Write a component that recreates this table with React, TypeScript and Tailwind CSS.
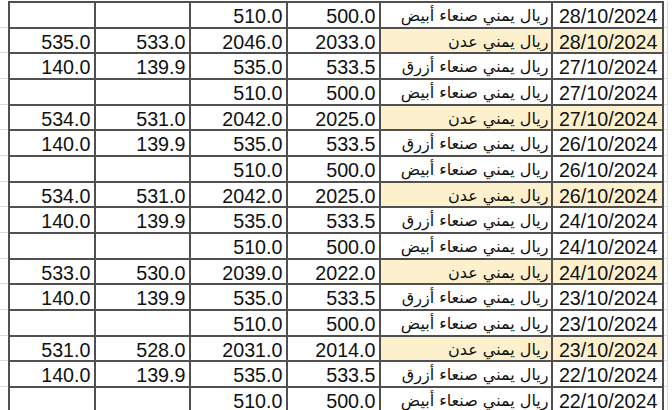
type Row = {
  date: string;
  name: string;
  aden?: boolean;
  a: string;
  b: string;
  c?: string;
  d?: string;
};

const WHITE = "ريال يمني صنعاء أبيض";
const BLUE = "ريال يمني صنعاء أزرق";
const ADEN = "ريال يمني عدن";

const rows: Row[] = [
  { date: "28/10/2024", name: WHITE, a: "500.0", b: "510.0" },
  { date: "28/10/2024", name: ADEN, aden: true, a: "2033.0", b: "2046.0", c: "533.0", d: "535.0" },
  { date: "27/10/2024", name: BLUE, a: "533.5", b: "535.0", c: "139.9", d: "140.0" },
  { date: "27/10/2024", name: WHITE, a: "500.0", b: "510.0" },
  { date: "27/10/2024", name: ADEN, aden: true, a: "2025.0", b: "2042.0", c: "531.0", d: "534.0" },
  { date: "26/10/2024", name: BLUE, a: "533.5", b: "535.0", c: "139.9", d: "140.0" },
  { date: "26/10/2024", name: WHITE, a: "500.0", b: "510.0" },
  { date: "26/10/2024", name: ADEN, aden: true, a: "2025.0", b: "2042.0", c: "531.0", d: "534.0" },
  { date: "24/10/2024", name: BLUE, a: "533.5", b: "535.0", c: "139.9", d: "140.0" },
  { date: "24/10/2024", name: WHITE, a: "500.0", b: "510.0" },
  { date: "24/10/2024", name: ADEN, aden: true, a: "2022.0", b: "2039.0", c: "530.0", d: "533.0" },
  { date: "23/10/2024", name: BLUE, a: "533.5", b: "535.0", c: "139.9", d: "140.0" },
  { date: "23/10/2024", name: WHITE, a: "500.0", b: "510.0" },
  { date: "23/10/2024", name: ADEN, aden: true, a: "2014.0", b: "2031.0", c: "528.0", d: "531.0" },
  { date: "22/10/2024", name: BLUE, a: "533.5", b: "535.0", c: "139.9", d: "140.0" },
  { date: "22/10/2024", name: WHITE, a: "500.0", b: "510.0" },
];

function Num({ value }: { value?: string }) {
  return (
    <div className="bg-white text-right pr-1 pt-[3px] leading-[21px] whitespace-nowrap overflow-hidden">
      {value ?? ""}
    </div>
  );
}

function Gutter({ right }: { right?: boolean }) {
  return (
    <div className={`flex flex-col pt-[2px] ${right ? "w-[8px]" : "w-[9px]"}`}>
      {rows.map((_, i) => (
        <div
          key={i}
          className={`h-[25.67px] shrink-0 border-b border-[#dcdcdc] ${right ? "w-[4px] border-r" : ""}`}
        />
      ))}
    </div>
  );
}

export default function App() {
  return (
    <div className="w-[672px] h-[410px] overflow-hidden bg-white flex text-[#111] font-['Liberation_Sans',Arial,sans-serif] text-[19.7px]">
      <Gutter />
      {/* sheet */}
      <div className="mt-px self-start grid grid-cols-[84px_93px_95px_91px_170px_109px] auto-rows-[23.67px] gap-[2px] border-2 border-[#505050] bg-[#505050]">
        {rows.map((r, i) => (
          <div key={i} className="contents">
            <Num value={r.d} />
            <Num value={r.c} />
            <Num value={r.b} />
            <Num value={r.a} />
            <div
              dir="rtl"
              className={`text-right pr-[3px] pt-[2px] leading-[21px] whitespace-nowrap overflow-hidden font-['DejaVu_Sans',sans-serif] text-[16px] ${r.aden ? "bg-[#fcf0cd]" : "bg-white"}`}
            >
              {r.name}
            </div>
            <div
              className={`text-right pr-[5px] pt-[3px] leading-[21px] whitespace-nowrap overflow-hidden ${r.aden ? "bg-[#fcf0cd]" : "bg-white"}`}
            >
              {r.date}
            </div>
          </div>
        ))}
      </div>
      <Gutter right />
    </div>
  );
}
